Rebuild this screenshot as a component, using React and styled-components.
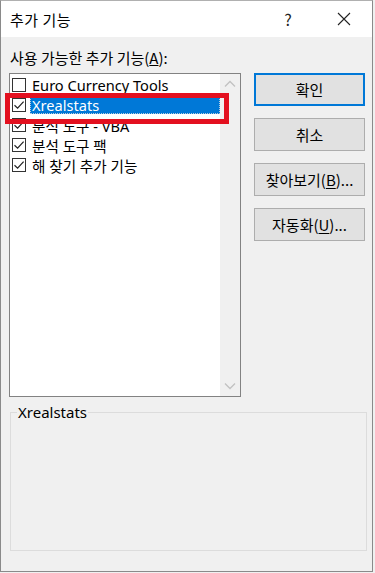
import React from "react";
import styled, { createGlobalStyle } from "styled-components";

const Global = createGlobalStyle`
  html, body { margin: 0; padding: 0; background: #f0f0f0; }
  body { font-family: "Segoe UI", "Noto Sans", "Noto Sans CJK KR", sans-serif; }
`;

const Win = styled.div`
  position: relative;
  box-sizing: border-box;
  width: 373px;
  height: 572px;
  border: 1px solid #8a8a8a;
  border-top-color: #b0b0b0;
  background: #f0f0f0;
  display: flex;
  flex-direction: column;
  font-family: "Noto Sans", "Noto Sans CJK KR", sans-serif;
  color: #000;
`;

const TitleBar = styled.div`
  height: 36px;
  background: #fff;
  display: flex;
  align-items: center;
  padding-left: 9px;
  font-size: 15px;
  font-family: "Noto Sans CJK KR", sans-serif;
`;

const Title = styled.div`
  flex: 1;
  letter-spacing: 0.5px;
`;

const TitleBtn = styled.div`
  width: 56px;
  height: 36px;
  display: flex;
  align-items: center;
  justify-content: center;
  font-size: 16px;
  color: #222;
`;

const Body = styled.div`
  flex: 1;
  display: flex;
  flex-direction: column;
  padding: 9px 7px 0 8px;
`;

const Label = styled.div`
  font-size: 15px;
  font-family: "Noto Sans CJK KR", sans-serif;
  height: 24px;
  line-height: 24px;
  padding-left: 1px;
  margin-bottom: 3px;
`;

const Row = styled.div`
  display: flex;
  gap: 13px;
`;

const List = styled.div`
  box-sizing: border-box;
  width: 233px;
  height: 324px;
  border: 1px solid #828282;
  background: #fff;
  display: flex;
`;

const Items = styled.div`
  flex: 1;
  padding-top: 1px;
`;

const Item = styled.div`
  height: 20px;
  display: flex;
  align-items: center;
  padding-left: 2px;
  font-size: 14.6px;
  font-family: "Noto Sans", "Noto Sans CJK KR", sans-serif;
`;

const Box = styled.div`
  box-sizing: border-box;
  width: 14px;
  height: 14px;
  border: 1px solid #333;
  background: #fff;
  display: flex;
  align-items: center;
  justify-content: center;
  margin-right: 4px;
  flex: none;
`;

const ItemText = styled.span`
  display: flex;
  align-items: center;
  height: 18px;
  padding: 0 2px;
  flex: ${p => (p.$sel ? 1 : "none")};
  background: ${p => (p.$sel ? "#0078d7" : "transparent")};
  color: ${p => (p.$sel ? "#fff" : "#000")};
  outline: ${p => (p.$sel ? "1px dotted #bcd" : "none")};
  outline-offset: -1px;
  white-space: nowrap;
`;

const Scroll = styled.div`
  width: 20px;
  background: #f0f0f0;
  display: flex;
  flex-direction: column;
  justify-content: space-between;
  align-items: center;
  padding: 6px 0 6px;
`;

const Buttons = styled.div`
  display: flex;
  flex-direction: column;
  gap: 12px;
`;

const Btn = styled.div`
  box-sizing: border-box;
  width: 111px;
  height: 33px;
  background: #e1e1e1;
  border: ${p => (p.$def ? "2px solid #0078d7" : "1px solid #adadad")};
  display: flex;
  align-items: center;
  justify-content: center;
  font-size: 15px;
  font-family: "Noto Sans CJK KR", sans-serif;
  u { text-underline-offset: 2px; }
`;

const Group = styled.fieldset`
  box-sizing: border-box;
  margin: 6px 0 0 1px;
  width: 357px;
  height: 148px;
  border: 1px solid #dcdcdc;
  padding: 0;
  min-width: 0;
`;

const Legend = styled.legend`
  margin-left: 6px;
  padding: 0 1px;
  font-size: 15px;
  font-family: "Noto Sans", sans-serif;
  line-height: 18px;
`;

const Highlight = styled.div`
  position: absolute;
  left: 4px;
  top: 92px;
  width: 224px;
  height: 31px;
  box-sizing: border-box;
  border: 5px solid #e3101f;
  pointer-events: none;
`;

const Check = () => (
  <svg width="12" height="12" viewBox="0 0 12 12">
    <path d="M1.5 6.2 L4.6 9.2 L10.6 2.6" fill="none" stroke="#222" strokeWidth="1.2" />
  </svg>
);

const Chevron = ({ up }) => (
  <svg width="12" height="8" viewBox="0 0 12 8">
    <path d={up ? "M1 6.5 L6 1.5 L11 6.5" : "M1 1.5 L6 6.5 L11 1.5"} fill="none" stroke="#c2c2c2" strokeWidth="1.3" />
  </svg>
);

const items = [
  { name: "Euro Currency Tools", on: false },
  { name: "Xrealstats", on: true, sel: true },
  { name: "분석 도구 - VBA", on: true },
  { name: "분석 도구 팩", on: true },
  { name: "해 찾기 추가 기능", on: true },
];

export default function App() {
  return (
    <>
      <Global />
      <Win>
        <TitleBar>
          <Title>추가 기능</Title>
          <TitleBtn>?</TitleBtn>
          <TitleBtn>
            <svg width="14" height="14" viewBox="0 0 14 14">
              <path d="M1 1 L13 13 M13 1 L1 13" stroke="#222" strokeWidth="1.1" />
            </svg>
          </TitleBtn>
        </TitleBar>
        <Body>
          <Label>
            사용 가능한 추가 기능(<u>A</u>):
          </Label>
          <Row>
            <List>
              <Items>
                {items.map(it => (
                  <Item key={it.name}>
                    <Box>{it.on && <Check />}</Box>
                    <ItemText $sel={it.sel}>{it.name}</ItemText>
                  </Item>
                ))}
              </Items>
              <Scroll>
                <Chevron up />
                <Chevron />
              </Scroll>
            </List>
            <Buttons>
              <Btn $def>확인</Btn>
              <Btn>취소</Btn>
              <Btn>
                찾아보기(<u>B</u>)...
              </Btn>
              <Btn>
                자동화(<u>U</u>)...
              </Btn>
            </Buttons>
          </Row>
          <Group>
            <Legend>Xrealstats</Legend>
          </Group>
        </Body>
        <Highlight />
      </Win>
    </>
  );
}
